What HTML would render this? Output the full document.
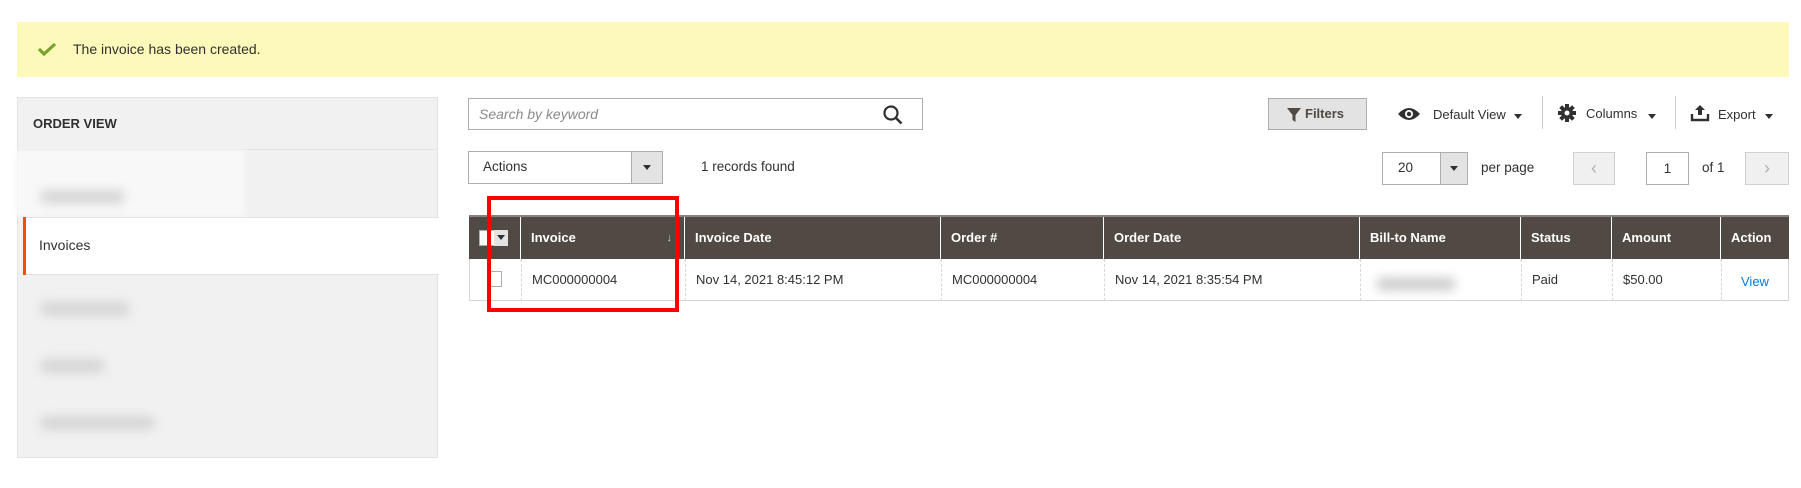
<!DOCTYPE html>
<html><head><meta charset="utf-8"><style>
*{box-sizing:border-box;margin:0;padding:0}
body{width:1801px;height:488px;background:#fff;font-family:"Liberation Sans",sans-serif;color:#303030;position:relative;overflow:hidden;font-size:13.5px}
.a{position:absolute}
.msg{left:17px;top:22px;width:1772px;height:55px;background:#fdf9bb}
.side{left:17px;top:97px;width:421px;height:361px;background:#f1f1f1;border:1px solid #e3e3e3}
.blur{position:absolute;height:14px;background:#d6d6d6;border-radius:8px;filter:blur(5px)}
.box{border:1px solid #adadad;background:#fff}
.th{position:absolute;top:0;height:42px;line-height:42px;color:#fff;font-weight:bold;font-size:13px;padding-left:10px;border-left:1px solid #fff}
.td{position:absolute;top:0;height:42px;line-height:42px;font-size:13px;padding-left:10px;border-left:1px dashed #d6d6d6}
.arr{display:inline-block;width:0;height:0;border-left:4px solid transparent;border-right:4px solid transparent;border-top:5px solid #303030;vertical-align:middle}
</style></head><body>
<div class="a msg">
 <svg class="a" style="left:20px;top:20px" width="20" height="15" viewBox="0 0 20 15"><path d="M2 7l5 5L18 2" stroke="#79a22e" stroke-width="3.2" fill="none"/></svg>
 <div class="a" style="left:56px;top:19px;font-size:14px;color:#303030">The invoice has been created.</div>
</div>
<div class="a side">
 <div class="a" style="left:15px;top:18px;font-weight:bold;font-size:13px;color:#303030">ORDER VIEW</div>
 <div class="a" style="left:0;top:51px;width:419px;height:1px;background:#e3e3e3"></div>
 <div class="a" style="left:-3px;top:52px;width:230px;height:66px;background:#f8f8f8;filter:blur(3px)"></div>
 <div class="blur" style="left:22px;top:92px;width:85px"></div>
 <div class="a" style="left:5px;top:119px;width:416px;height:58px;background:#fff;border-top:1px solid #e3e3e3;border-bottom:1px solid #e3e3e3"></div>
 <div class="a" style="left:5px;top:119px;width:3px;height:58px;background:#eb5202"></div>
 <div class="a" style="left:21px;top:139px;font-size:14px">Invoices</div>
 <div class="blur" style="left:22px;top:204px;width:90px"></div>
 <div class="blur" style="left:22px;top:261px;width:65px"></div>
 <div class="blur" style="left:22px;top:318px;width:115px"></div>
</div>

<div class="a box" style="left:468px;top:98px;width:455px;height:32px"></div>
<div class="a" style="left:479px;top:106px;font-style:italic;color:#8a8a8a;font-size:14px">Search by keyword</div>
<svg class="a" style="left:882px;top:104px" width="22" height="22" viewBox="0 0 22 22"><circle cx="9" cy="9" r="6.5" stroke="#303030" stroke-width="2.2" fill="none"/><path d="M13.5 13.5l6 6" stroke="#303030" stroke-width="2.6"/></svg>

<div class="a box" style="left:468px;top:151px;width:195px;height:33px"></div>
<div class="a" style="left:631px;top:151px;width:32px;height:33px;background:#e3e3e3;border:1px solid #adadad;text-align:center;line-height:30px"><span class="arr"></span></div>
<div class="a" style="left:483px;top:159px">Actions</div>
<div class="a" style="left:701px;top:159px">1 records found</div>

<div class="a" style="left:1268px;top:98px;width:99px;height:32px;background:#e3e3e3;border:1px solid #adadad"></div>
<svg class="a" style="left:1286px;top:107px" width="16" height="16" viewBox="0 0 16 16"><path d="M1 1h14L9.5 8v7L6.5 13V8z" fill="#514943"/></svg>
<div class="a" style="left:1305px;top:106px;font-weight:bold;font-size:13px;color:#514943">Filters</div>
<svg class="a" style="left:1397px;top:106px" width="24" height="16" viewBox="0 0 24 16"><path d="M1 8Q12 -4 23 8Q12 20 1 8z" fill="#303030"/><circle cx="12" cy="8" r="4" fill="#fff"/><circle cx="12" cy="8" r="2.2" fill="#303030"/></svg>
<div class="a" style="left:1433px;top:107px;font-size:13px">Default View</div>
<span class="a arr" style="left:1514px;top:114px"></span>
<div class="a" style="left:1542px;top:96px;width:1px;height:33px;background:#ccc"></div>
<svg class="a" style="left:1558px;top:104px" width="18" height="18" viewBox="0 0 18 18"><g fill="#303030"><circle cx="9" cy="9" r="6"/><rect x="7" y="0" width="4" height="18"/><rect x="0" y="7" width="18" height="4"/><rect x="7" y="0" width="4" height="18" transform="rotate(45 9 9)"/><rect x="7" y="0" width="4" height="18" transform="rotate(-45 9 9)"/></g><circle cx="9" cy="9" r="2.5" fill="#fff"/></svg>
<div class="a" style="left:1586px;top:106px;font-size:13px">Columns</div>
<span class="a arr" style="left:1648px;top:114px"></span>
<div class="a" style="left:1675px;top:96px;width:1px;height:33px;background:#ccc"></div>
<svg class="a" style="left:1690px;top:104px" width="20" height="18" viewBox="0 0 20 18"><path d="M10 1l5 5h-3v5h-4V6H5z" fill="#303030"/><path d="M2 10v6h16v-6" stroke="#303030" stroke-width="2.4" fill="none"/></svg>
<div class="a" style="left:1718px;top:107px;font-size:13px">Export</div>
<span class="a arr" style="left:1765px;top:114px"></span>

<div class="a box" style="left:1382px;top:152px;width:86px;height:33px"></div>
<div class="a" style="left:1440px;top:152px;width:28px;height:33px;background:#e3e3e3;border:1px solid #adadad;text-align:center;line-height:30px"><span class="arr"></span></div>
<div class="a" style="left:1398px;top:160px">20</div>
<div class="a" style="left:1481px;top:160px">per page</div>
<div class="a" style="left:1573px;top:152px;width:42px;height:33px;background:#f0f0f0;border:1px solid #d1d1d1;text-align:center;line-height:30px;color:#b0b0b0;font-size:18px">&#8249;</div>
<div class="a box" style="left:1646px;top:152px;width:43px;height:33px;text-align:center;line-height:31px">1</div>
<div class="a" style="left:1702px;top:160px">of 1</div>
<div class="a" style="left:1745px;top:152px;width:44px;height:33px;background:#f0f0f0;border:1px solid #d1d1d1;text-align:center;line-height:30px;color:#b0b0b0;font-size:18px">&#8250;</div>

<div class="a" style="left:469px;top:215px;width:1320px;height:44px;background:#514943;border-top:2px solid #8a837f">
 <div class="a" style="left:10px;top:13px;width:16px;height:16px;background:#fff;border:1px solid #adadad"></div>
 <div class="a" style="left:25px;top:13px;width:14px;height:16px;background:#e3e3e3;text-align:center;line-height:14px"><span class="arr" style="border-top-color:#303030"></span></div>
 <div class="th" style="left:51px;width:164px">Invoice<span style="position:absolute;right:12px;font-weight:normal;font-size:11px;color:#cfcfcf">&#8595;</span></div>
 <div class="th" style="left:215px">Invoice Date</div>
 <div class="th" style="left:471px">Order #</div>
 <div class="th" style="left:634px">Order Date</div>
 <div class="th" style="left:890px">Bill-to Name</div>
 <div class="th" style="left:1051px">Status</div>
 <div class="th" style="left:1142px">Amount</div>
 <div class="th" style="left:1251px">Action</div>
</div>
<div class="a" style="left:469px;top:259px;width:1320px;height:42px;border:1px solid #d6d6d6;border-top:none">
 <div class="a" style="left:18px;top:12px;width:14px;height:16px;border:1px solid #adadad"></div>
 <div class="td" style="left:51px">MC000000004</div>
 <div class="td" style="left:215px">Nov 14, 2021 8:45:12 PM</div>
 <div class="td" style="left:471px">MC000000004</div>
 <div class="td" style="left:634px">Nov 14, 2021 8:35:54 PM</div>
 <div class="td" style="left:890px;width:161px"><div class="blur" style="left:15px;top:18px;width:80px;background:#d0d0d0"></div></div>
 <div class="td" style="left:1051px">Paid</div>
 <div class="td" style="left:1142px">$50.00</div>
 <div class="td" style="left:1251px;padding-left:20px;color:#007bdb;top:2px;border-left:none"><span></span>View</div>
 <div class="a" style="left:1251px;top:0;height:41px;border-left:1px dashed #d6d6d6"></div>
</div>
<div class="a" style="left:487px;top:196px;width:192px;height:116px;border:4px solid #ff0000"></div>
</body></html>
